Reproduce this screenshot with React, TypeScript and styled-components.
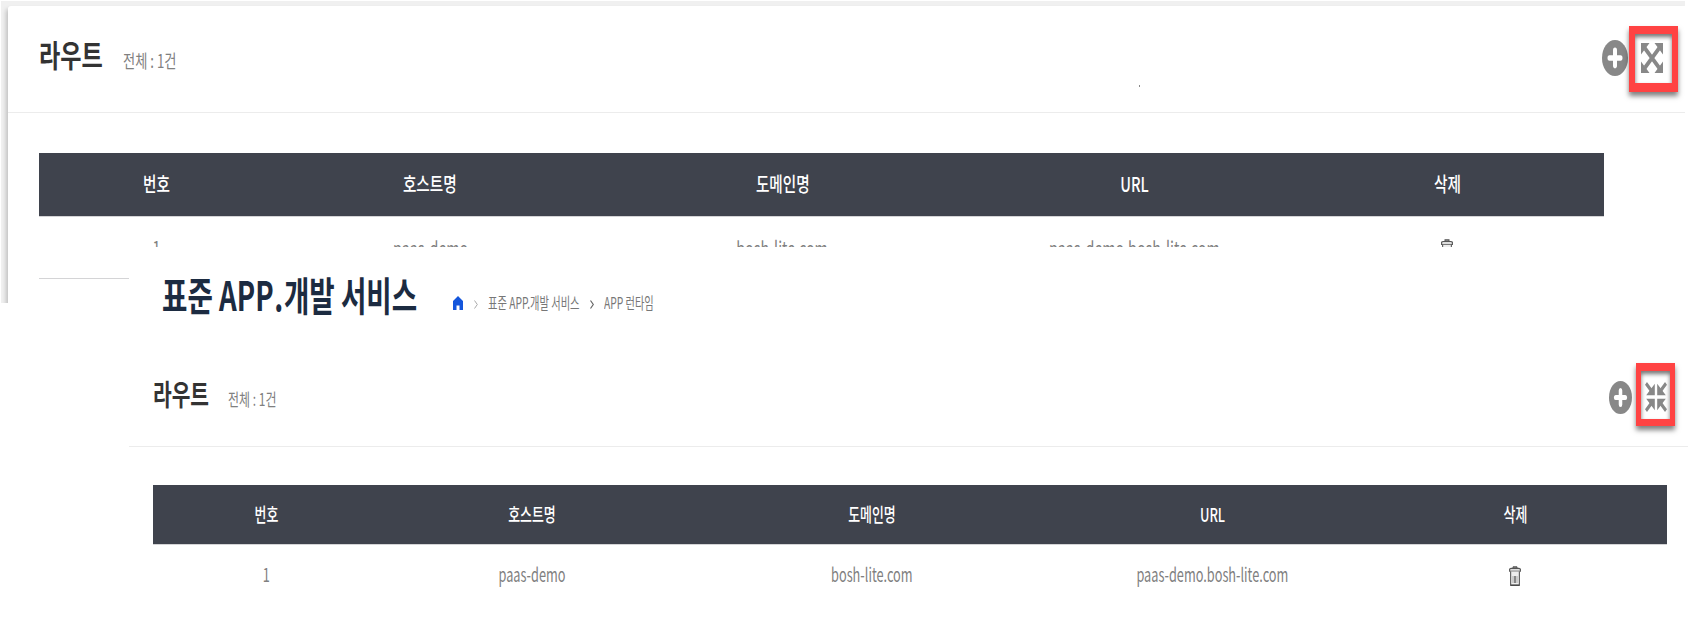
import React from 'react';
import styled, { createGlobalStyle } from 'styled-components';

const Global = createGlobalStyle`
  * { box-sizing: border-box; }
  body { margin: 0; background: #fff; font-family: 'Noto Sans CJK KR', 'Noto Sans', sans-serif; }
`;

const Screen = styled.main`
  position: relative;
  width: 1702px;
  height: 618px;
  overflow: hidden;
  background: #fff;
`;

const Backdrop = styled.div`
  width: 1684px;
  height: 302px;
  margin: 1px 0 0 1px;
  padding: 5px 0 0 7px;
  overflow: hidden;
  background: #f0f0f0;
`;

const Card = styled.section`
  height: 400px;
  background: #fff;
  border-top-left-radius: 3px;
  box-shadow: -2px 3px 4px rgba(0, 0, 0, 0.2);
`;

const Expanded = styled.section`
  position: absolute;
  left: 129px;
  top: 247px;
  width: 1573px;
  height: 371px;
  background: #fff;
`;

const PageHead = styled.header`
  display: flex;
  height: 98px;
  padding-left: 33px;
`;

const PanelHead = styled.div<{ $h: number; $left: number; $w: number }>`
  display: flex;
  width: ${p => p.$w}px;
  height: ${p => p.$h}px;
  padding-left: ${p => p.$left}px;
  border-bottom: 1px solid #ececec;
`;

const Slot = styled.span<{ $w: number; $mt?: number; $ml?: number }>`
  flex: none;
  display: block;
  width: ${p => p.$w}px;
  margin-top: ${p => p.$mt ?? 0}px;
  margin-left: ${p => p.$ml ?? 0}px;
`;

const Narrow = styled.span<{ $size: number; $x: number; $weight?: number; $color?: string; $center?: boolean }>`
  display: inline-block;
  white-space: pre;
  font-size: ${p => p.$size}px;
  line-height: 1.4;
  font-weight: ${p => p.$weight ?? 400};
  color: ${p => p.$color ?? '#808080'};
  transform: scaleX(${p => p.$x});
  transform-origin: ${p => (p.$center ? 'center' : 'left')};
`;

const Period = styled.span`
  margin: 0 1px 0 1px;
`;

const Table = styled.div<{ $w: number; $mt: number; $ml: number }>`
  width: ${p => p.$w}px;
  margin: ${p => p.$mt}px 0 0 ${p => p.$ml}px;
`;

const Row = styled.div<{ $h: number; $pb: number; $head?: boolean; $line?: boolean }>`
  display: grid;
  grid-template-columns: 15fr 20fr 25fr 20fr 20fr;
  align-items: center;
  justify-items: center;
  height: ${p => p.$h}px;
  padding-bottom: ${p => p.$pb}px;
  background: ${p => (p.$head ? '#3f434d' : '#fff')};
  border-bottom: ${p => (p.$line ? '1px solid #d4d4d6' : '0')};
`;

const Icon = styled.svg<{ $w: number; $h: number; $mt?: number; $ml?: number }>`
  flex: none;
  display: block;
  width: ${p => p.$w}px;
  height: ${p => p.$h}px;
  margin-top: ${p => p.$mt ?? 0}px;
  margin-left: ${p => p.$ml ?? 0}px;
`;

const Frame = styled.div<{ $w: number; $h: number; $mt: number; $ml: number; $b: string }>`
  flex: none;
  width: ${p => p.$w}px;
  height: ${p => p.$h}px;
  margin-top: ${p => p.$mt}px;
  margin-left: ${p => p.$ml}px;
  border: solid #ff4343;
  border-width: ${p => p.$b};
  box-shadow: 0 4px 5px rgba(0, 0, 0, 0.5), inset 0 3px 4px rgba(0, 0, 0, 0.55);
`;

const Speck = styled.i`
  flex: none;
  width: 1px;
  height: 2px;
  margin: 79px 0 0 961px;
  background: #888;
`;

const Plus = ({ w, h, mt, ml }: { w: number; h: number; mt: number; ml: number }) => (
  <Icon $w={w} $h={h} $mt={mt} $ml={ml} viewBox="0 0 26 26" preserveAspectRatio="none">
    <circle cx="13" cy="13" r="13" fill="#888" />
    <path d="M13 7.500v11M7.500 13h11" stroke="#fff" strokeWidth="4" strokeLinecap="round" />
  </Icon>
);

const Expand = () => (
  <Icon $w={22} $h={30} $mt={9} $ml={6} viewBox="0 0 22 22" preserveAspectRatio="none">
    <path d="M4 4l14 14M18 4L4 18" stroke="#888" strokeWidth="3.4" />
    <path d="M0 0h8.500L0 8.500zM22 0v8.500L13.500 0zM0 22v-8.500L8.500 22zM22 22h-8.500l8.500-8.500z" fill="#888" />
  </Icon>
);

const Collapse = () => (
  <Icon $w={22} $h={30} $mt={11} $ml={4} viewBox="0 0 22 22" preserveAspectRatio="none">
    <path d="M1 1l6 6M21 1l-6 6M1 21l6-6M21 21l-6-6" stroke="#888" strokeWidth="2.8" />
    <path d="M9.800 1.200v8.600H1.200zM12.200 1.200v8.600h8.600zM9.800 20.800v-8.600H1.200zM12.200 20.800v-8.600h8.600z" fill="#888" />
  </Icon>
);

const Trash = ({ w, h }: { w: number; h: number }) => (
  <Icon $w={w} $h={h} $mt={3} $ml={-2} viewBox="0 0 12 20" preserveAspectRatio="none">
    <path d="M4 2.500V.8h4v1.700" fill="#888" stroke="#555" />
    <path d="M.6 5.200V3l1.400-.6h8L11.400 3v2.200z" fill="#ddd" stroke="#555" strokeWidth="1.1" />
    <path d="M1.600 5.500v13.700h8.800V5.500" fill="#eee" stroke="#666" strokeWidth="1.2" />
    <path d="M1.500 19.300h9" stroke="#444" strokeWidth="1.2" />
    <path d="M4 10v7M8 10v7" stroke="#aaa" strokeWidth="1" />
    <path d="M6 10v7" stroke="#444" strokeWidth="1.2" />
  </Icon>
);

type Cell = { text: string; x: number };

const DataTable = (p: {
  w: number; mt: number; ml: number; size: number; headH: number; rowH: number; pb: number;
  line?: boolean; head: Cell[]; body: Cell[]; trash: [number, number];
}) => (
  <Table $w={p.w} $mt={p.mt} $ml={p.ml}>
    <Row $h={p.headH} $pb={1} $head $line>
      {p.head.map(c => (
        <Narrow key={c.text} $size={p.size} $x={c.x} $weight={500} $color="#fff" $center>{c.text}</Narrow>
      ))}
    </Row>
    <Row $h={p.rowH} $pb={p.pb} $line={p.line}>
      {p.body.map(c => (
        <Narrow key={c.text} $size={p.size} $x={c.x} $center>{c.text}</Narrow>
      ))}
      <Trash w={p.trash[0]} h={p.trash[1]} />
    </Row>
  </Table>
);

const cells = (texts: string[], x: number): Cell[] => texts.map(text => ({ text, x }));
const HEAD = ['번호', '호스트명', '도메인명', 'URL', '삭제'];
const BODY = ['1', 'paas-demo', 'bosh-lite.com', 'paas-demo.bosh-lite.com'];

export default function App() {
  return (
    <Screen>
      <Global />
      <Backdrop>
        <Card>
          <PanelHead $h={107} $left={31} $w={1677}>
            <Slot $w={84} $mt={26}><Narrow $size={31} $x={0.745} $weight={700} $color="#333">라우트</Narrow></Slot>
            <Slot $w={55} $mt={42}><Narrow $size={18} $x={0.735}>전체 : 1건</Narrow></Slot>
            <Speck />
            <Plus w={26} h={36} mt={34} ml={462} />
            <Frame $w={49} $h={66} $mt={20} $ml={1} $b="8px 6px 9px"><Expand /></Frame>
          </PanelHead>
          <DataTable w={1565} mt={40} ml={31} size={20} headH={64} rowH={62} pb={0} line
            head={cells(HEAD, 0.73)} body={cells(BODY, 0.715)} trash={[12, 21]} />
        </Card>
      </Backdrop>
      <Expanded>
        <PageHead>
          <Slot $w={291} $mt={19}>
            <Narrow $size={40} $x={0.69} $weight={700} $color="#1c2b41">표준 APP<Period>.</Period>개발 서비스</Narrow>
          </Slot>
          <Icon $w={10} $h={14} $mt={49} viewBox="0 0 10 14"><path d="M5 0L10 5V14H6.5V9.5h-3V14H0V5z" fill="#1456dc" /></Icon>
          <Icon $w={4} $h={9} $mt={53} $ml={11} viewBox="0 0 4 9"><path d="M.5.5L3.3 4.5.5 8.5" fill="none" stroke="#aaa" /></Icon>
          <Slot $w={102} $mt={43} $ml={10}><Narrow $size={16} $x={0.642} $color="#777">표준 APP.개발 서비스</Narrow></Slot>
          <Icon $w={4} $h={9} $mt={53} viewBox="0 0 4 9"><path d="M.5.5L3.3 4.500.5 8.500" fill="none" stroke="#666" strokeWidth="1.2" /></Icon>
          <Slot $w={60} $mt={43} $ml={10}><Narrow $size={16} $x={0.64} $color="#777">APP 런타임</Narrow></Slot>
        </PageHead>
        <PanelHead $h={102} $left={24} $w={1559}>
          <Slot $w={75} $mt={28}><Narrow $size={29} $x={0.7} $weight={700} $color="#333">라우트</Narrow></Slot>
          <Slot $w={1381} $mt={42}><Narrow $size={17} $x={0.705}>전체 : 1건</Narrow></Slot>
          <Plus w={23} h={33} mt={36} ml={0} />
          <Frame $w={39} $h={63} $mt={18} $ml={4} $b="8px 5px 7px"><Collapse /></Frame>
        </PanelHead>
        <DataTable w={1514} mt={38} ml={24} size={19} headH={60} rowH={62} pb={3}
          head={cells(HEAD, 0.68)} body={cells(BODY, 0.67)} trash={[12, 20]} />
      </Expanded>
    </Screen>
  );
}
